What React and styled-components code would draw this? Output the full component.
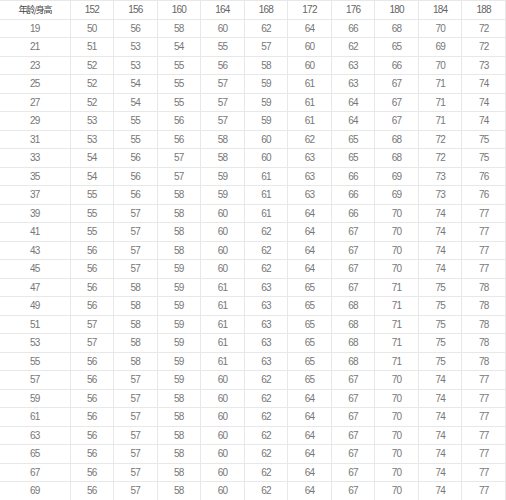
import React from 'react';
import styled, { createGlobalStyle } from 'styled-components';

const GlobalStyle = createGlobalStyle`
  html, body {
    margin: 0;
    padding: 0;
    background: #fff;
  }
`;

const heights = [152, 156, 160, 164, 168, 172, 176, 180, 184, 188];

const rows = [
  [19, 50, 56, 58, 60, 62, 64, 66, 68, 70, 72],
  [21, 51, 53, 54, 55, 57, 60, 62, 65, 69, 72],
  [23, 52, 53, 55, 56, 58, 60, 63, 66, 70, 73],
  [25, 52, 54, 55, 57, 59, 61, 63, 67, 71, 74],
  [27, 52, 54, 55, 57, 59, 61, 64, 67, 71, 74],
  [29, 53, 55, 56, 57, 59, 61, 64, 67, 71, 74],
  [31, 53, 55, 56, 58, 60, 62, 65, 68, 72, 75],
  [33, 54, 56, 57, 58, 60, 63, 65, 68, 72, 75],
  [35, 54, 56, 57, 59, 61, 63, 66, 69, 73, 76],
  [37, 55, 56, 58, 59, 61, 63, 66, 69, 73, 76],
  [39, 55, 57, 58, 60, 61, 64, 66, 70, 74, 77],
  [41, 55, 57, 58, 60, 62, 64, 67, 70, 74, 77],
  [43, 56, 57, 58, 60, 62, 64, 67, 70, 74, 77],
  [45, 56, 57, 59, 60, 62, 64, 67, 70, 74, 77],
  [47, 56, 58, 59, 61, 63, 65, 67, 71, 75, 78],
  [49, 56, 58, 59, 61, 63, 65, 68, 71, 75, 78],
  [51, 57, 58, 59, 61, 63, 65, 68, 71, 75, 78],
  [53, 57, 58, 59, 61, 63, 65, 68, 71, 75, 78],
  [55, 56, 58, 59, 61, 63, 65, 68, 71, 75, 78],
  [57, 56, 57, 59, 60, 62, 65, 67, 70, 74, 77],
  [59, 56, 57, 58, 60, 62, 64, 67, 70, 74, 77],
  [61, 56, 57, 58, 60, 62, 64, 67, 70, 74, 77],
  [63, 56, 57, 58, 60, 62, 64, 67, 70, 74, 77],
  [65, 56, 57, 58, 60, 62, 64, 67, 70, 74, 77],
  [67, 56, 57, 58, 60, 62, 64, 67, 70, 74, 77],
  [69, 56, 57, 58, 60, 62, 64, 67, 70, 74, 77],
];

const WeightTable = styled.table`
  width: 506px;
  height: 500px;
  border-collapse: collapse;
  table-layout: fixed;
  font-family: "Liberation Sans", Arial, "Noto Sans CJK SC", sans-serif;
`;

const Cell = styled.td`
  height: 17.5px;
  padding: 0;
  border: 1px solid #e8e8e8;
  text-align: center;
  vertical-align: middle;
  font-size: 10px;
  letter-spacing: -0.8px;
  color: ${(p) => (p.$head ? '#666' : '#777')};
  &:first-child {
    border-left: none;
  }
`;

const CornerLabel = styled.span`
  font-family: "Noto Sans CJK SC", sans-serif;
  font-size: 9px;
  letter-spacing: -1.4px;
  color: #444;
`;

export default function App() {
  return (
    <>
      <GlobalStyle />
      <WeightTable>
        <colgroup>
          <col style={{ width: 70 }} />
          {heights.map((h) => (
            <col key={h} />
          ))}
        </colgroup>
        <tbody>
          <tr>
            <Cell $head>
              <CornerLabel>年龄/身高</CornerLabel>
            </Cell>
            {heights.map((h) => (
              <Cell $head key={h}>
                {h}
              </Cell>
            ))}
          </tr>
          {rows.map((row) => (
            <tr key={row[0]}>
              {row.map((v, i) => (
                <Cell key={i}>{v}</Cell>
              ))}
            </tr>
          ))}
        </tbody>
      </WeightTable>
    </>
  );
}
